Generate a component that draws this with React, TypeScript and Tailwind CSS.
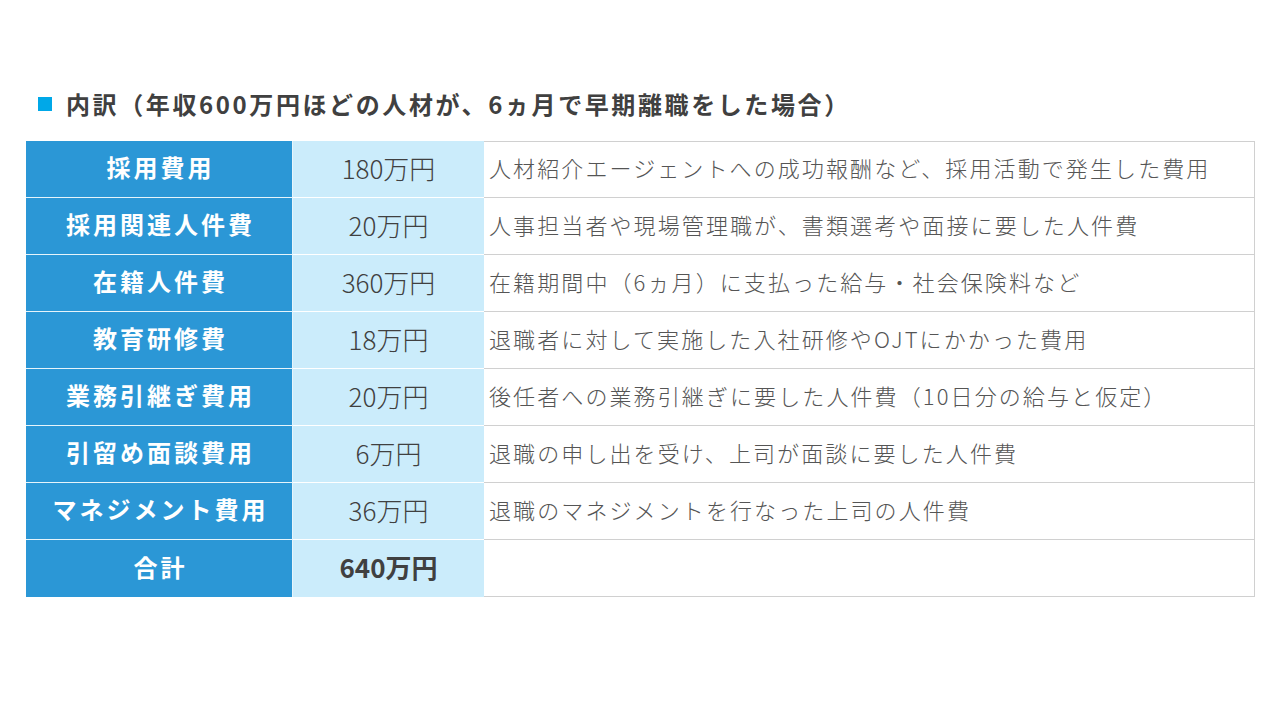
const rows = [
  { item: '採用費用', cost: '180万円', note: '人材紹介エージェントへの成功報酬など、採用活動で発生した費用' },
  { item: '採用関連人件費', cost: '20万円', note: '人事担当者や現場管理職が、書類選考や面接に要した人件費' },
  { item: '在籍人件費', cost: '360万円', note: '在籍期間中（6ヵ月）に支払った給与・社会保険料など' },
  { item: '教育研修費', cost: '18万円', note: '退職者に対して実施した入社研修やOJTにかかった費用' },
  { item: '業務引継ぎ費用', cost: '20万円', note: '後任者への業務引継ぎに要した人件費（10日分の給与と仮定）' },
  { item: '引留め面談費用', cost: '6万円', note: '退職の申し出を受け、上司が面談に要した人件費' },
  { item: 'マネジメント費用', cost: '36万円', note: '退職のマネジメントを行なった上司の人件費' },
]

const font = { fontFamily: '"Noto Sans CJK JP", "Noto Sans", sans-serif' }

export default function App() {
  return (
    <div className="w-[1280px] h-[720px] bg-white" style={font}>
      <div className="pt-[88px] pl-[38px] flex items-center gap-[14px]">
        <span className="w-[14px] h-[14px] bg-[#00a8e8]" />
        <h1 className="text-[24px] leading-[32px] font-bold text-[#404040] tracking-[2.6px]">
          内訳（年収600万円ほどの人材が、6ヵ月で早期離職をした場合）
        </h1>
      </div>

      <div className="mt-[21px] ml-[26px] w-[1229px]">
        {rows.map((r, i) => (
          <div key={r.item} className="flex h-[57px]">
            <div className="w-[267px] bg-[#2b97d6] border-r border-b border-[#e6f4fb] flex items-center justify-center pb-[4px] pl-[3px] text-white font-bold text-[24px] tracking-[3px]">
              {r.item}
            </div>
            <div className="w-[191px] bg-[#cbecfb] border-b border-white flex items-center justify-center pb-[4px] text-[26px] font-light text-[#404040]">
              {r.cost}
            </div>
            <div
              className={`flex-1 border-r border-b border-[#d0d0d0] ${i === 0 ? 'border-t' : ''} flex items-center pl-[5px] pb-[4px] text-[22px] tracking-[2.1px] font-light text-[#555555]`}
            >
              {r.note}
            </div>
          </div>
        ))}
        <div className="flex h-[57px]">
          <div className="w-[267px] bg-[#2b97d6] border-r border-[#e6f4fb] flex items-center justify-center pb-[4px] pl-[3px] text-white font-bold text-[24px] tracking-[3px]">
            合計
          </div>
          <div className="w-[191px] bg-[#cbecfb] flex items-center justify-center pb-[4px] text-[26px] font-bold text-[#404040]">
            640万円
          </div>
          <div className="flex-1 border-r border-b border-[#d0d0d0]" />
        </div>
      </div>
    </div>
  )
}
